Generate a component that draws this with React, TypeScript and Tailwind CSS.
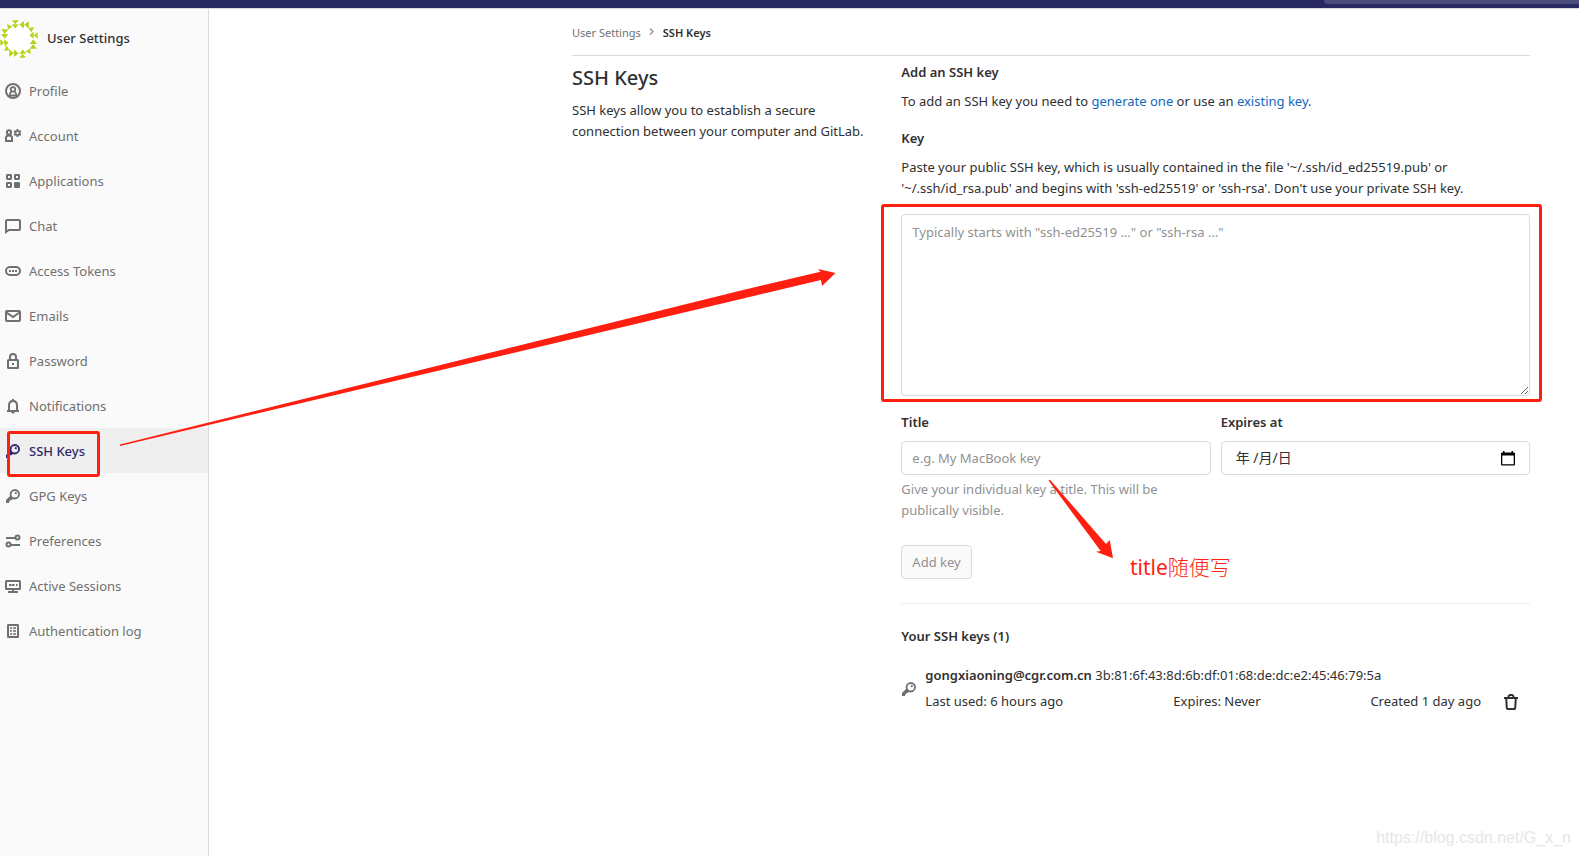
import React from "react";

type IconProps = { children: React.ReactNode; className?: string };

function Icon({ children, className = "" }: IconProps) {
  return (
    <svg
      viewBox="0 0 16 16"
      className={`size-4 shrink-0 ${className}`}
      fill="none"
      stroke="currentColor"
      strokeWidth="2"
      aria-hidden="true"
    >
      {children}
    </svg>
  );
}

const KeyShape = (
  <>
    <path
      fill="currentColor"
      stroke="none"
      fillRule="evenodd"
      d="M9.6 1a5.2 5.2 0 1 1-1.9 10L6.5 12.2H5v1.3H4V15H1v-3l4-4.1A5.2 5.2 0 0 1 9.6 1zm.2 1.9a3.3 3.3 0 1 0 0 6.6 3.3 3.3 0 0 0 0-6.6z"
    />
    <circle cx="10.8" cy="5.2" r="1.1" fill="currentColor" stroke="none" />
  </>
);

const items: { label: string; icon: React.ReactNode }[] = [
  {
    label: "Profile",
    icon: (
      <>
        <circle cx="8" cy="8" r="7" />
        <circle cx="8" cy="6.4" r="2.2" strokeWidth="1.8" />
        <path d="M4.4 13.2c0-2.3.8-3.7 2-4.6M11.6 13.2c0-2.3-.8-3.700-2-4.600M4.500 12.500h7" strokeWidth="1.8" />
      </>
    ),
  },
  {
    label: "Account",
    icon: (
      <>
        <circle cx="4" cy="4.4" r="2.1" strokeWidth="2" />
        <path d="M1 13V9.8C1 8.4 2.2 7.4 4 7.4s3 1 3 2.4V13z" />
        <circle cx="12.5" cy="5" r="2.1" strokeWidth="1.9" />
        <path d="M12.5 1v1.8M12.5 7.2V9M9 3l1.6.9M14.4 6.1L16 7M9 7l1.6-.9M14.4 3.9L16 3" strokeWidth="1.8" />
      </>
    ),
  },
  {
    label: "Applications",
    icon: (
      <>
        <rect x="2" y="2" width="4" height="4" rx=".4" />
        <rect x="10" y="2" width="4" height="4" rx=".4" />
        <rect x="2" y="10" width="4" height="4" rx=".4" />
        <rect x="9" y="9" width="6" height="6" rx="1" fill="currentColor" stroke="none" />
      </>
    ),
  },
  { label: "Chat", icon: <path d="M1 14V3a1 1 0 0 1 1-1h12a1 1 0 0 1 1 1v8a1 1 0 0 1-1 1H3.8z" /> },
  {
    label: "Access Tokens",
    icon: (
      <>
        <rect x="1" y="4" width="14" height="8" rx="4" />
        <path d="M4 8h2M7 8h2M10 8h2" />
      </>
    ),
  },
  {
    label: "Emails",
    icon: (
      <>
        <rect x="1" y="3" width="14" height="10" rx="1" />
        <path d="M1.5 4.5L8 9l6.5-4.5" />
      </>
    ),
  },
  {
    label: "Password",
    icon: (
      <>
        <rect x="3" y="7" width="10" height="8" rx=".5" />
        <path d="M5 7V4a3 3 0 0 1 6 0v3M7 11h2" />
      </>
    ),
  },
  {
    label: "Notifications",
    icon: (
      <>
        <path d="M2 13h12M4 12.5V7.5C4 5 5.5 3 8 3s4 2 4 4.5v5" />
        <path d="M8 1v2M6.5 14.5h3" />
      </>
    ),
  },
  { label: "SSH Keys", icon: KeyShape },
  { label: "GPG Keys", icon: KeyShape },
  {
    label: "Preferences",
    icon: (
      <>
        <path d="M1 5h9M6 12h9" />
        <circle cx="12.5" cy="4.5" r="2" />
        <circle cx="3.5" cy="11.5" r="2" />
      </>
    ),
  },
  {
    label: "Active Sessions",
    icon: (
      <>
        <rect x="1" y="3" width="14" height="8" rx=".5" />
        <path d="M4 7h2.5M7 7h2.5M11 7h1.5M8 11v3M3 14h10" />
      </>
    ),
  },
  {
    label: "Authentication log",
    icon: (
      <>
        <rect x="3" y="2" width="10" height="12" rx=".3" />
        <path d="M5 5h2M8 5h3M5 8h2M8 8h3M5 11h2M8 11h3" strokeWidth="1.5" />
      </>
    ),
  },
];

function Avatar() {
  return (
    <svg viewBox="0 0 40 40" className="-ml-px size-10 shrink-0" aria-hidden="true">
      <circle cx="20" cy="20" r="19" fill="#ffffff" />
      {[0, 90, 180, 270].map((angle) => (
        <path
          key={angle}
          transform={`rotate(${angle} 20 20)`}
          fill="#b9d11f"
          d="M20.300 5.700L25 2v7.400zM25 5.700l4.800-3.500v7.200zM13 1.600l6.700-.6-3.300 4.300zM12.600 5.300h7.200l-3.600 4.300zM8 5l5.500 2.500L9 10.500z"
        />
      ))}
    </svg>
  );
}

export default function App() {
  return (
    <div className="relative flex min-h-screen flex-col overflow-x-hidden bg-white font-['Noto_Sans','Noto_Sans_CJK_SC',sans-serif] text-[13px] leading-[21px] text-[#303030]">
      <header className="flex h-2 shrink-0 justify-end bg-[#292961]">
        <div className="h-1 w-[255px] rounded-bl bg-[#4c4c7c]" />
      </header>

      <div className="flex flex-1 border-t border-[#dbdbdb]">
        <aside className="w-[209px] shrink-0 border-r border-[#dbdbdb] bg-[#fafafa]">
          <a href="#settings" className="flex h-[59px] items-center gap-2 font-medium">
            <Avatar />
            <span>User Settings</span>
          </a>
          <nav aria-label="User settings">
            <ul>
              {items.map(({ label, icon }) => {
                const active = label === "SSH Keys";
                return (
                  <li key={label} className="relative">
                    <a
                      href="#"
                      aria-current={active ? "page" : undefined}
                      className={`flex h-[45px] items-center gap-2 pt-px pl-[5px] ${
                        active ? "bg-[#efefef] font-medium text-[#2f2a6b]" : "text-[#707070]"
                      }`}
                    >
                      <Icon>{icon}</Icon>
                      {label}
                    </a>
                    {active && (
                      <div className="pointer-events-none absolute top-[3px] left-[7px] h-[46px] w-[93px] rounded-[3px] border-3 border-[#ff1f11]" />
                    )}
                  </li>
                );
              })}
            </ul>
          </nav>
        </aside>

        <main className="mr-[49px] ml-auto w-full max-w-[958px]">
          <nav aria-label="Breadcrumb" className="flex h-[47px] items-center border-b border-[#dbdbdb] text-[11px]">
            <a href="#settings" className="text-[#707070]">User Settings</a>
            <svg viewBox="0 0 8 8" className="mx-[7px] size-2" fill="none" stroke="#999999" strokeWidth="1.5" aria-hidden="true">
              <path d="M2 .5l3 3-3 3" />
            </svg>
            <a href="#ssh" className="font-semibold">SSH Keys</a>
          </nav>

          <div className="grid grid-cols-3 gap-[30px]">
            <section className="pt-2">
              <h1 className="text-xl leading-7 font-medium">SSH Keys</h1>
              <p className="mt-2">SSH keys allow you to establish a secure connection between your computer and GitLab.</p>
            </section>

            <section className="col-span-2 pt-[6px]">
              <h2 className="font-semibold">Add an SSH key</h2>
              <p className="mt-2">
                To add an SSH key you need to <a href="#generate" className="text-[#1068bf]">generate one</a> or use an{" "}
                <a href="#existing" className="text-[#1068bf]">existing key</a>.
              </p>

              <form onSubmit={(e) => e.preventDefault()}>
                <label htmlFor="key" className="mt-4 block font-semibold">Key</label>
                <p className="mt-2">
                  Paste your public SSH key, which is usually contained in the file '~/.ssh/id_ed25519.pub' or
                  '~/.ssh/id_rsa.pub' and begins with 'ssh-ed25519' or 'ssh-rsa'. Don't use your private SSH key.
                </p>
                <div className="relative mt-[15px]">
                  <textarea
                    id="key"
                    placeholder={'Typically starts with "ssh-ed25519 …" or "ssh-rsa …"'}
                    className="block h-[182px] w-full resize-y rounded border border-[#dbdbdb] px-[10px] py-[7px] placeholder:text-[#919191]"
                  />
                  <div className="pointer-events-none absolute -top-[10px] -right-3 -bottom-[6px] -left-5 rounded-[3px] border-3 border-[#ff1f11]" />
                </div>

                <div className="mt-4 grid grid-cols-2 gap-[10px]">
                  <div>
                    <label htmlFor="title" className="block font-semibold">Title</label>
                    <input
                      id="title"
                      type="text"
                      placeholder="e.g. My MacBook key"
                      className="mt-2 block h-[34px] w-full rounded border border-[#dbdbdb] px-[10px] placeholder:text-[#919191]"
                    />
                    <p className="mt-1 pr-6 text-[#919191]">Give your individual key a title. This will be publically visible.</p>
                  </div>
                  <div>
                    <label htmlFor="expires" className="block font-semibold">Expires at</label>
                    <div className="mt-2 flex h-[34px] items-center rounded border border-[#dbdbdb] px-[14px]">
                      <input id="expires" type="text" defaultValue="年 /月/日" className="min-w-0 flex-1 text-sm" />
                      <button type="button" aria-label="Choose a date">
                        <svg viewBox="0 0 14 15" className="h-[15px] w-[14px]" aria-hidden="true">
                          <path fill="#000000" fillRule="evenodd" d="M2 0h1.500v1.500h7V0H12v1.500h1a1 1 0 0 1 1 1V13.500a1 1 0 0 1-1 1H1a1 1 0 0 1-1-1V2.500a1 1 0 0 1 1-1h1zM1.300 4.500v8.700h11.400V4.500z" />
                        </svg>
                      </button>
                    </div>
                  </div>
                </div>

                <button
                  type="submit"
                  disabled
                  className="mt-6 block h-[34px] rounded border border-[#dbdbdb] bg-[#fafafa] px-[10px] text-[#919191]"
                >
                  Add key
                </button>
              </form>

              <hr className="mt-6 border-[#eeeeee]" />
              <h2 className="mt-[22px] font-semibold">Your SSH keys (1)</h2>

              <div className="mt-[18px] flex items-center gap-2">
                <Icon className="text-[#707070]">{KeyShape}</Icon>
                <div className="flex-1">
                  <p>
                    <strong className="font-semibold">gongxiaoning@cgr.com.cn</strong> 3b:81:6f:43:8d:6b:df:01:68:de:dc:e2:45:46:79:5a
                  </p>
                  <div className="mt-[5px] flex items-center">
                    <span className="w-[248px]">Last used: 6 hours ago</span>
                    <span>Expires: Never</span>
                    <span className="ml-auto">Created 1 day ago</span>
                    <button type="button" aria-label="Remove key" className="mr-[11px] ml-[22px]">
                      <Icon>
                        <path d="M1 4h14M5.500 3.500V3a1.800 1.800 0 0 1 1.800-2h1.400a1.800 1.800 0 0 1 1.800 2v.5M3.200 4.500l.6 9.500a1 1 0 0 0 1 1h6.400a1 1 0 0 0 1-1l.6-9.500" />
                      </Icon>
                    </button>
                  </div>
                </div>
              </div>
            </section>
          </div>
        </main>
      </div>

      <svg
        viewBox="0 0 1579 856"
        className="pointer-events-none absolute top-0 left-0 h-[856px] w-[1579px]"
        fill="#ff1f11"
        aria-hidden="true"
      >
        <path d="M120 444.500L740 290.700l80.500-19L818 269l17.500 4L822 286l-1-6-81 19.300L120 446z" />
        <path d="M1048.500 480.500l1.500-.8L1106 544l3.700-4 3.300 18.300-17-6.600 4.700-.7z" />
      </svg>
      <p className="pointer-events-none absolute top-[553px] left-[1130px] text-[21px] leading-7 text-[#ff1f11]">
        title<span className="font-light">随便写</span>
      </p>
      <p className="pointer-events-none absolute right-2 bottom-2 font-['Liberation_Sans',sans-serif] text-base leading-5 text-[#e6e6e6]">
        https://blog.csdn.net/G_x_n
      </p>
    </div>
  );
}
